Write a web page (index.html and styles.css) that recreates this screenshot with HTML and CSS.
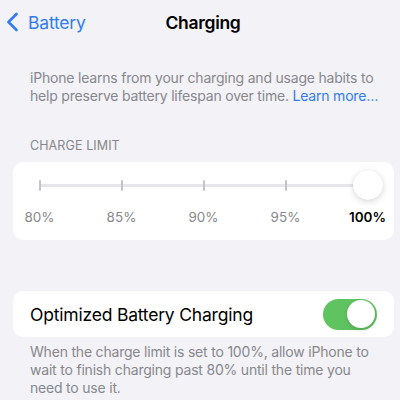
FILE: index.html
```html
<!DOCTYPE html>
<html lang="en">
  <head>
    <meta charset="UTF-8" />
    <meta name="viewport" content="width=device-width, initial-scale=1.0" />
    <title>Charging</title>
    <link rel="stylesheet" href="styles.css">
  </head>
  <body>
    <div class="nav">
      <a class="back" href="#">
        <svg width="13" height="20" viewBox="0 0 13 20">
          <polyline points="10.5,2 2.5,10 10.5,18" fill="none" stroke="#317cf4" stroke-width="2.6" stroke-linecap="round" stroke-linejoin="round" />
        </svg>
        <span>Battery</span>
      </a>
      <div class="title">Charging</div>
      <div></div>
    </div>

    <p class="desc">
      iPhone learns from your charging and usage habits to help preserve
      battery lifespan over time. <a href="#">Learn more…</a>
    </p>

    <div class="section-header">CHARGE LIMIT</div>
    <div class="card limit">
      <div class="slider">
        <div class="track"></div>
        <div class="ticks">
          <span></span><span></span><span></span><span></span><span></span>
        </div>
        <div class="thumb"></div>
      </div>
      <div class="labels">
        <span>80%</span>
        <span>85%</span>
        <span>90%</span>
        <span>95%</span>
        <span class="active">100%</span>
      </div>
    </div>

    <div class="card row">
      <span>Optimized Battery Charging</span>
      <div class="switch"><div class="knob"></div></div>
    </div>
    <p class="footer">
      When the charge limit is set to 100%, allow iPhone to wait to finish
      charging past 80% until the time you need to use it.
    </p>
  </body>
</html>
```

FILE: styles.css
```css
body {
  font-family: Inter, "Noto Sans", sans-serif;
  background-color: #f2f2f7;
  margin: 0;
  padding: 0;
  color: #000;
}
a {
  color: #317cf4;
  text-decoration: none;
}
.nav {
  height: 44px;
  display: grid;
  grid-template-columns: 1fr auto 1fr;
  align-items: center;
  padding-left: 6px;
}
.back {
  display: flex;
  align-items: center;
  gap: 9px;
  font-size: 17.5px;
  letter-spacing: -0.2px;
}
.back svg {
  display: block;
}
.title {
  font-size: 17.5px;
  font-weight: 600;
  letter-spacing: -0.3px;
}
.desc {
  margin: 25px 0 0;
  padding: 0 10px 0 30px;
  font-size: 14px;
  line-height: 18px;
  color: #88888c;
  letter-spacing: -0.2px;
}
.section-header {
  margin-top: 33px;
  padding-left: 30px;
  font-size: 12.5px;
  line-height: 16px;
  color: #88888c;
  letter-spacing: 0.1px;
}
.card {
  background-color: #fff;
  border-radius: 10px;
  margin: 0 6px 0 13px;
}
.limit {
  margin-top: 8px;
  height: 78px;
  padding-top: 8px;
  box-sizing: border-box;
}
.slider {
  position: relative;
  height: 30px;
  margin: 0 25.5px;
}
.track {
  position: absolute;
  left: 0;
  right: 0;
  top: 13.5px;
  height: 3px;
  background-color: #e5e5ea;
}
.ticks {
  height: 100%;
  display: flex;
  justify-content: space-between;
  align-items: center;
}
.ticks span {
  width: 2px;
  height: 11px;
  border-radius: 1px;
  background-color: #c3c3c8;
  position: relative;
}
.thumb {
  position: absolute;
  right: -14px;
  top: 0;
  width: 30px;
  height: 30px;
  border-radius: 50%;
  background-color: #fff;
  box-shadow: 0 2px 6px rgba(0, 0, 0, 0.15), 0 0 1px rgba(0, 0, 0, 0.12);
}
.labels {
  margin: 9px 1.5px 0;
  display: flex;
  justify-content: space-between;
  font-size: 13.5px;
  line-height: 16px;
  color: #88888c;
}
.labels span {
  width: 50px;
  text-align: center;
}
.labels .active {
  color: #000;
  font-weight: 600;
}
.row {
  margin-top: 51px;
  height: 46px;
  display: flex;
  align-items: center;
  justify-content: space-between;
  padding: 0 17px;
  font-size: 17.5px;
  letter-spacing: -0.2px;
}
.switch {
  width: 54px;
  height: 31px;
  border-radius: 16px;
  background-color: #5fc35f;
  display: flex;
  align-items: center;
  justify-content: flex-end;
  padding: 0 2px;
  box-sizing: border-box;
}
.knob {
  width: 28px;
  height: 28px;
  border-radius: 50%;
  background-color: #fff;
  box-shadow: 0 2px 4px rgba(0, 0, 0, 0.15);
}
.footer {
  margin: 6px 0 0;
  padding: 0 20px 0 30px;
  font-size: 14px;
  line-height: 18px;
  color: #88888c;
  letter-spacing: -0.2px;
}
```
